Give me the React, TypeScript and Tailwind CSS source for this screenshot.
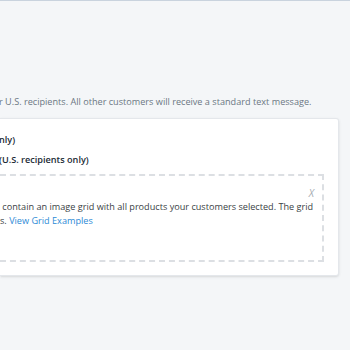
export default function App() {
  return (
    <div className="w-[350px] h-[350px] overflow-hidden bg-[#f4f6f8] border-t border-[#c9d3de] font-['Open_Sans',sans-serif]">
      <div className="pt-[94px] pr-[11px]">
        <p className="text-[9.15px] leading-[14px] text-[#6b7683] whitespace-nowrap -ml-[1px]">
          r U.S. recipients. All other customers will receive a standard text message.
        </p>
        <div className="mt-[9px] bg-white rounded-r-[3px] border border-l-0 border-[#e4e7eb] shadow-sm pt-[14px] pb-[13px] pr-[14px]">
          <div className="flex flex-col gap-[6px] text-[9.15px] leading-[14px] font-semibold text-[#212b36] whitespace-nowrap">
            <span className="-ml-[1px]">nly)</span>
            <span className="-ml-[1px]">(U.S. recipients only)</span>
          </div>
          <div className="mt-[7px] h-[88px] border-2 border-l-0 border-dashed border-[#dcdfe3] pr-[8px]">
            <div className="flex justify-end pt-[10px]">
              <span className="text-[10px] leading-[14px] italic text-[#a6abb1]">X</span>
            </div>
            <p className="text-[9.15px] leading-[14px] text-[#3a3f45] whitespace-nowrap">
              &nbsp;contain an image grid with all products your customers selected. The grid
              <br />
              s. <span className="text-[#2d8ad6]">View Grid Examples</span>
            </p>
          </div>
        </div>
      </div>
    </div>
  );
}
